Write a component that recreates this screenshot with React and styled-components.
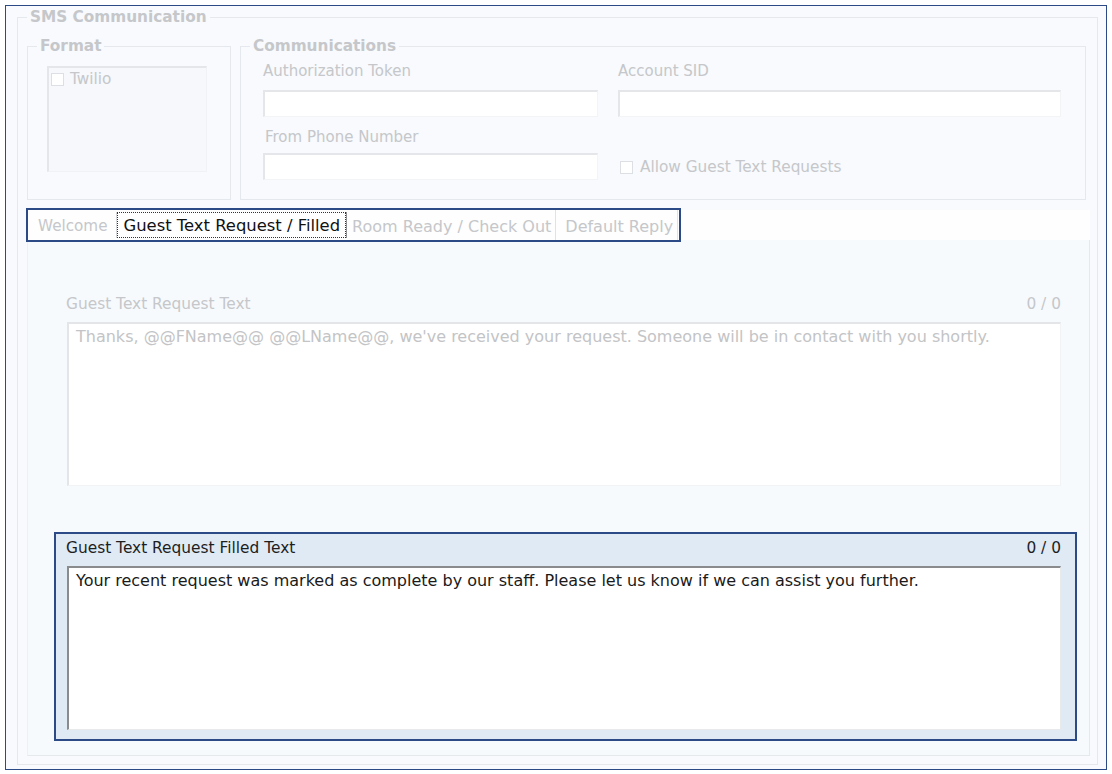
import React from "react";
import styled, { createGlobalStyle } from "styled-components";

const BLUE = "#2b4a86";
const FADED = "#c5c7ca";
const LINE = "#e5e8ec";

const GlobalStyle = createGlobalStyle`
  html, body { margin: 0; padding: 0; background: #ffffff; }
  body { font-family: "DejaVu Sans", Verdana, sans-serif; }
  * { box-sizing: border-box; }
`;

const Frame = styled.div`
  margin: 5px;
  width: 1102px;
  height: 765px;
  border: 1px solid ${BLUE};
  background: #f8fafd;
  padding: 2px 8px 0 11px;
`;

const Group = styled.fieldset`
  margin: 0;
  padding: 0;
  min-width: 0;
  border: 1px solid ${LINE};
  width: ${(p) => (p.$width ? `${p.$width}px` : "auto")};
`;

const Legend = styled.legend`
  margin-left: 9px;
  padding: 0 3px;
  font: bold 15.3px/18px "DejaVu Sans", Verdana, sans-serif;
  color: ${FADED};
`;

const SmsBody = styled.div`
  display: flex;
  flex-direction: column;
  padding: 11px 7px 8px 9px;
`;

const TopRow = styled.div`
  display: flex;
  gap: 9px;
  height: 163px;
`;

const ListBox = styled.div`
  margin: 11px 0 0 19px;
  width: 160px;
  height: 106px;
  background: #f6f8fb;
  border-top: 2px solid #e4e6ea;
  border-left: 2px solid #e4e6ea;
  border-right: 1px solid #f0f2f5;
  border-bottom: 1px solid #f0f2f5;
  padding: 3px 0 0 2px;
`;

const CheckRow = styled.label`
  display: flex;
  align-items: center;
  gap: ${(p) => p.$gap || 6}px;
  font-size: 15.3px;
  line-height: 17px;
  color: ${FADED};
  padding-left: ${(p) => p.$indent || 0}px;
  align-self: ${(p) => p.$align || "auto"};
  margin-bottom: ${(p) => p.$bottom || 0}px;
`;

const Box = styled.span`
  width: 13px;
  height: 13px;
  flex: none;
  background: #ffffff;
  border: 1px solid #dcdfe3;
`;

const CommGrid = styled.div`
  display: grid;
  grid-template-columns: 335px 443px;
  column-gap: 20px;
  padding: 8px 0 0 22px;
`;

const Field = styled.div`
  display: flex;
  flex-direction: column;
  margin-top: ${(p) => p.$top || 0}px;
`;

const FieldLabel = styled.div`
  font-size: 15px;
  line-height: 17px;
  color: ${FADED};
  padding-left: ${(p) => p.$indent || 0}px;
  margin-bottom: ${(p) => p.$gap}px;
`;

const TextBox = styled.div`
  height: 27px;
  background: #ffffff;
  border-top: 2px solid #e4e6ea;
  border-left: 2px solid #e4e6ea;
  border-right: 1px solid #f3f4f6;
  border-bottom: 1px solid #f3f4f6;
`;

const TabStrip = styled.div`
  display: flex;
  height: 30px;
  margin-top: 10px;
  background: #fefefe;
`;

const TabGroup = styled.div`
  position: relative;
  z-index: 1;
  display: flex;
  align-items: stretch;
  height: 34px;
  margin: -2px 0 -2px -1px;
  padding-right: 1px;
  border: 2px solid ${BLUE};
`;

const Tab = styled.div`
  display: flex;
  align-items: center;
  padding: ${(p) => p.$pad};
  padding-top: 2px;
  font-size: ${(p) => p.$size || 16}px;
  color: ${FADED};
  white-space: nowrap;
  border-right: ${(p) => (p.$sep ? "1px solid #e0e2e5" : "none")};
`;

const ActiveTab = styled.div`
  display: flex;
  margin: 2px 2px 2px 0;
  background: #ffffff;
  border-left: 1px solid #d4d6d9;
  border-right: 1px solid #8f9194;
`;

const FocusRing = styled.span`
  display: flex;
  align-items: center;
  padding: 0 5px;
  border: 1px dotted #333333;
  font-size: 16.4px;
  color: #111111;
  white-space: nowrap;
`;

const Panel = styled.div`
  height: 516px;
  background: #f7fafd;
  border-left: 1px solid #eef0f3;
  border-right: 1px solid ${LINE};
  border-bottom: 1px solid ${LINE};
  padding: 48px 12px 0 26px;
`;

const FieldBox = styled.div`
  margin-bottom: 35px;
  padding: 0 14px 9px 11px;
  border: 2px solid ${(p) => (p.$active ? BLUE : "transparent")};
  background: ${(p) => (p.$active ? "#e0eaf5" : "transparent")};
`;

const LabelRow = styled.div`
  display: flex;
  justify-content: space-between;
  height: 32px;
  padding: 6px 0 0 0;
  margin-left: -1px;
  font-size: 15.4px;
  line-height: 17px;
  color: ${(p) => (p.$active ? "#1e1e1e" : FADED)};
`;

const MessageArea = styled.textarea`
  display: block;
  width: 100%;
  height: 164px;
  margin: 0;
  resize: none;
  outline: none;
  overflow: hidden;
  background: #ffffff;
  padding: 3px 7px;
  font: 16px/19px "DejaVu Sans", Verdana, sans-serif;
  color: ${(p) => (p.$active ? "#1a1a1a" : "#c3c4c6")};
  border-top: 2px solid ${(p) => (p.$active ? "#8a8b8d" : "#e3e5e8")};
  border-left: 2px solid ${(p) => (p.$active ? "#8a8b8d" : "#e3e5e8")};
  border-right: 1px solid ${(p) => (p.$active ? "#e8e9eb" : "#f2f3f5")};
  border-bottom: 1px solid ${(p) => (p.$active ? "#e8e9eb" : "#f2f3f5")};
`;

const MessageField = ({ label, text, active }) => (
  <FieldBox $active={active}>
    <LabelRow $active={active}>
      <span>{label}</span>
      <span>0 / 0</span>
    </LabelRow>
    <MessageArea $active={active} value={text} readOnly />
  </FieldBox>
);

export default function App() {
  return (
    <>
      <GlobalStyle />
      <Frame>
        <Group>
          <Legend>SMS Communication</Legend>
          <SmsBody>
            <TopRow>
              <Group $width={204}>
                <Legend>Format</Legend>
                <ListBox>
                  <CheckRow>
                    <Box />
                    Twilio
                  </CheckRow>
                </ListBox>
              </Group>
              <Group $width={846}>
                <Legend>Communications</Legend>
                <CommGrid>
                  <Field>
                    <FieldLabel $gap={10}>Authorization Token</FieldLabel>
                    <TextBox />
                  </Field>
                  <Field>
                    <FieldLabel $gap={10}>Account SID</FieldLabel>
                    <TextBox />
                  </Field>
                  <Field $top={12}>
                    <FieldLabel $gap={7} $indent={2}>
                      From Phone Number
                    </FieldLabel>
                    <TextBox />
                  </Field>
                  <CheckRow $align="end" $bottom={4} $indent={2} $gap={7}>
                    <Box />
                    Allow Guest Text Requests
                  </CheckRow>
                </CommGrid>
              </Group>
            </TopRow>

            <TabStrip>
              <TabGroup>
                <Tab $pad="0 9px 0 10px" $size={15.2}>
                  Welcome
                </Tab>
                <ActiveTab>
                  <FocusRing>Guest Text Request / Filled</FocusRing>
                </ActiveTab>
                <Tab $pad="0 4px 0 3px" $sep>
                  Room Ready / Check Out
                </Tab>
                <Tab $pad="0 4px 0 9px" $sep>
                  Default Reply
                </Tab>
              </TabGroup>
            </TabStrip>

            <Panel>
              <MessageField
                label="Guest Text Request Text"
                text="Thanks, @@FName@@ @@LName@@, we've received your request. Someone will be in contact with you shortly."
              />
              <MessageField
                active
                label="Guest Text Request Filled Text"
                text="Your recent request was marked as complete by our staff. Please let us know if we can assist you further."
              />
            </Panel>
          </SmsBody>
        </Group>
      </Frame>
    </>
  );
}
